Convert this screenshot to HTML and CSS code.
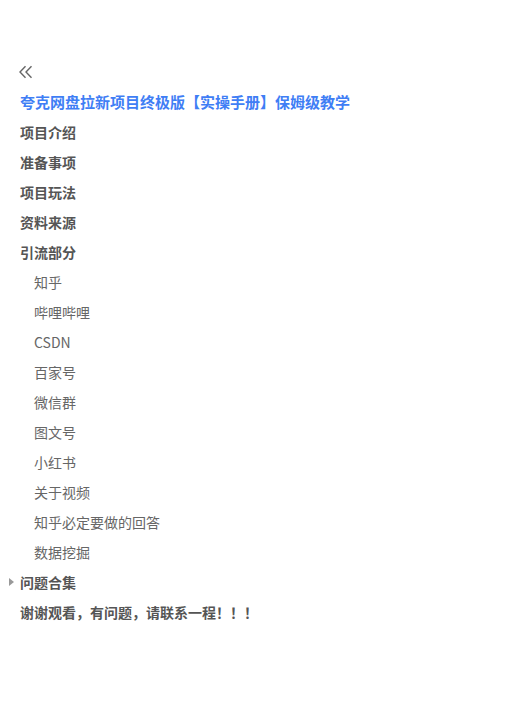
FILE: index.html
```html
<!DOCTYPE html>
<html lang="zh">
<head>
<meta charset="utf-8">
<link rel="stylesheet" href="styles.css">
</head>
<body>
<nav class="toc">
  <div class="row back">
    <svg class="chev" width="16" height="14" viewBox="0 0 16 14"><path d="M7.5 1.2 L2 7 L7.5 12.8 M13.5 1.2 L8 7 L13.5 12.8" fill="none" stroke="#666" stroke-width="1.4"/></svg>
  </div>
  <div class="row title">夸克网盘拉新项目终极版【实操手册】保姆级教学</div>
  <div class="row h">项目介绍</div>
  <div class="row h">准备事项</div>
  <div class="row h">项目玩法</div>
  <div class="row h">资料来源</div>
  <div class="row h">引流部分</div>
  <div class="row sub">知乎</div>
  <div class="row sub">哔哩哔哩</div>
  <div class="row sub">CSDN</div>
  <div class="row sub">百家号</div>
  <div class="row sub">微信群</div>
  <div class="row sub">图文号</div>
  <div class="row sub">小红书</div>
  <div class="row sub">关于视频</div>
  <div class="row sub">知乎必定要做的回答</div>
  <div class="row sub">数据挖掘</div>
  <div class="row h collapsed"><span class="tri"></span>问题合集</div>
  <div class="row h">谢谢观看，有问题，请联系一程！！！</div>
</nav>
</body>
</html>
```
FILE: styles.css
```css
html, body {
  margin: 0;
  padding: 0;
  background: #fff;
}
body {
  font-family: "Noto Sans CJK SC", "Liberation Sans", sans-serif;
  font-size: 14px;
  color: #555;
}
.toc {
  padding-top: 57px;
  display: flex;
  flex-direction: column;
}
.row {
  height: 30px;
  line-height: 30px;
  padding-left: 20px;
  position: relative;
  white-space: nowrap;
}
.back {
  display: flex;
  align-items: center;
  padding-left: 18px;
}
.title {
  color: #3f7ef5;
  font-weight: bold;
  font-size: 15px;
}
.h {
  font-weight: bold;
  color: #555;
}
.sub {
  padding-left: 34px;
  color: #666;
}
.tri {
  position: absolute;
  left: 9px;
  top: 11px;
  width: 0;
  height: 0;
  border-top: 4px solid transparent;
  border-bottom: 4px solid transparent;
  border-left: 5px solid #999;
}
```
